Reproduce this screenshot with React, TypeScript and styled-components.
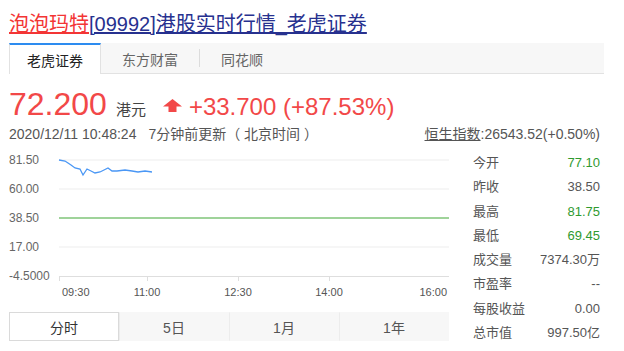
import styled, { createGlobalStyle } from "styled-components";

const GlobalStyle = createGlobalStyle`
  body {
    margin: 0;
    background: #fff;
    font-family: "Liberation Sans", "Noto Sans CJK SC", sans-serif;
    color: #333;
  }
`;

const Page = styled.div`
  width: 624px;
  height: 351px;
  box-sizing: border-box;
  padding: 10px 0 0 9px;
  overflow: hidden;
`;

const Title = styled.h1`
  margin: 0 0 5px;
  font-size: 20px;
  font-weight: normal;
  line-height: 28px;
  white-space: nowrap;
`;

const TitleLink = styled.a<{ $red?: boolean }>`
  color: ${(p) => (p.$red ? "#f33535" : "#27318f")};
  text-decoration: underline;
`;

const TabBar = styled.div`
  display: flex;
  width: 595px;
  height: 30px;
  background: #f7f7f7;
  border-bottom: 1px solid #e2e2e2;
`;

const SourceTab = styled.div<{ $active?: boolean }>`
  display: flex;
  align-items: center;
  box-sizing: border-box;
  height: ${(p) => (p.$active ? "31px" : "30px")};
  padding: 0 ${(p) => (p.$active ? "17px" : "20px")};
  font-size: 14px;
  color: ${(p) => (p.$active ? "#222" : "#666")};
  background: ${(p) => (p.$active ? "#fff" : "transparent")};
  border-top: 2px solid ${(p) => (p.$active ? "#2d8cf0" : "transparent")};
  border-left: 1px solid ${(p) => (p.$active ? "#e2e2e2" : "transparent")};
  border-right: 1px solid ${(p) => (p.$active ? "#e2e2e2" : "transparent")};
`;

const TabDivider = styled.span`
  align-self: center;
  width: 1px;
  height: 18px;
  background: #dcdcdc;
`;

const PriceRow = styled.div`
  display: flex;
  align-items: baseline;
  margin-top: 10px;
  height: 40px;
  line-height: 40px;
  color: #f24848;
`;

const Price = styled.span`
  font-size: 32px;
`;

const Currency = styled.span`
  margin-left: 9px;
  font-size: 15px;
  color: #444;
`;

const UpArrow = styled.svg`
  margin-left: 17px;
  width: 19px;
  height: 13px;
  align-self: center;
  margin-top: 3px;
`;

const Change = styled.span`
  margin-left: 7px;
  font-size: 24px;
`;

const InfoRow = styled.div`
  display: flex;
  justify-content: space-between;
  width: 591px;
  height: 20px;
  line-height: 20px;
  font-size: 14px;
  color: #555;
  white-space: nowrap;
`;

const Updated = styled.span`
  margin-left: 12px;
`;

const IndexLink = styled.a`
  color: #555;
  text-decoration: underline;
`;

const Body = styled.div`
  display: flex;
  margin-top: 6px;
`;

const ChartColumn = styled.div`
  display: flex;
  flex-direction: column;
  width: 440px;
`;

const Chart = styled.svg`
  display: block;
  width: 440px;
  height: 155px;
  font-family: "Liberation Sans", sans-serif;
`;

const PeriodTabs = styled.div`
  display: flex;
  margin-top: 7px;
  height: 29px;
  background: #f7f7f7;
`;

const PeriodTab = styled.div<{ $active?: boolean }>`
  flex: 1;
  display: flex;
  align-items: center;
  justify-content: center;
  box-sizing: border-box;
  font-size: 14px;
  color: ${(p) => (p.$active ? "#333" : "#555")};
  background: ${(p) => (p.$active ? "#fff" : "transparent")};
  border: 1px solid ${(p) => (p.$active ? "#dadada" : "transparent")};
  & + & {
    border-left: 1px solid #ececec;
  }
`;

const Stats = styled.dl`
  margin: 1px 0 0 24px;
  width: 127px;
`;

const StatRow = styled.div`
  display: flex;
  justify-content: space-between;
  height: 24.3px;
  line-height: 24px;
  font-size: 13px;
  color: #555;
`;

const StatLabel = styled.dt`
  margin: 0;
`;

const StatValue = styled.dd<{ $green?: boolean }>`
  margin: 0;
  color: ${(p) => (p.$green ? "#2f9a2f" : "#555")};
`;

const yLabels = [
  { text: "81.50", y: 10 },
  { text: "60.00", y: 39 },
  { text: "38.50", y: 68 },
  { text: "17.00", y: 97 },
  { text: "-4.5000", y: 126 },
];

const ticks = [50, 138, 229, 320, 440];

const times = [
  { text: "09:30", x: 53, anchor: "start" },
  { text: "11:00", x: 138, anchor: "middle" },
  { text: "12:30", x: 229, anchor: "middle" },
  { text: "14:00", x: 320, anchor: "middle" },
  { text: "16:00", x: 438, anchor: "end" },
];

const line =
  "50,10 56,11 59,13 62,15 66,18 71,19 74,25 78,19 82,21 86,23 91,22 95,20 99,18 103,21 108,21 116,20 123,21 129,22 136,21 143,22";

const stats = [
  { label: "今开", value: "77.10", green: true },
  { label: "昨收", value: "38.50" },
  { label: "最高", value: "81.75", green: true },
  { label: "最低", value: "69.45", green: true },
  { label: "成交量", value: "7374.30万" },
  { label: "市盈率", value: "--" },
  { label: "每股收益", value: "0.00" },
  { label: "总市值", value: "997.50亿" },
];

export default function App() {
  return (
    <Page>
      <GlobalStyle />
      <Title>
        <TitleLink $red>泡泡玛特</TitleLink>
        <TitleLink>[09992]港股实时行情_老虎证券</TitleLink>
      </Title>

      <TabBar>
        <SourceTab $active>老虎证券</SourceTab>
        <SourceTab>东方财富</SourceTab>
        <TabDivider />
        <SourceTab>同花顺</SourceTab>
      </TabBar>

      <PriceRow>
        <Price>72.200</Price>
        <Currency>港元</Currency>
        <UpArrow viewBox="0 0 19 13">
          <path d="M9.5 0 L19 7.5 H13.5 V13 H5.5 V7.5 H0 Z" fill="#f24848" />
        </UpArrow>
        <Change>+33.700 (+87.53%)</Change>
      </PriceRow>

      <InfoRow>
        <span>
          2020/12/11 10:48:24
          <Updated>7分钟前更新（ 北京时间 ）</Updated>
        </span>
        <span>
          <IndexLink>恒生指数</IndexLink>:26543.52(+0.50%)
        </span>
      </InfoRow>

      <Body>
        <ChartColumn>
          <Chart viewBox="0 0 440 155">
            {yLabels.map((l) => (
              <g key={l.text}>
                {l.y !== 68 && l.y !== 126 && (
                  <line x1={50} x2={440} y1={l.y} y2={l.y} stroke="#ededed" strokeWidth={1} />
                )}
                <text x={0} y={l.y + 4} fontSize={12} fill="#666">
                  {l.text}
                </text>
              </g>
            ))}
            <line x1={50} x2={440} y1={68} y2={68} stroke="#9fd39a" strokeWidth={2} />
            <line x1={50} x2={440} y1={126.5} y2={126.5} stroke="#dedede" strokeWidth={1} />
            {ticks.map((x) => (
              <line key={x} x1={x + 0.5} x2={x + 0.5} y1={126} y2={131} stroke="#dedede" />
            ))}
            {times.map((t) => (
              <text
                key={t.text}
                x={t.x}
                y={146}
                fontSize={11}
                fill="#555"
                textAnchor={t.anchor as "start" | "middle" | "end"}
              >
                {t.text}
              </text>
            ))}
            <polyline points={line} fill="none" stroke="#4a97f5" strokeWidth={1.3} />
          </Chart>
          <PeriodTabs>
            <PeriodTab $active>分时</PeriodTab>
            <PeriodTab>5日</PeriodTab>
            <PeriodTab>1月</PeriodTab>
            <PeriodTab>1年</PeriodTab>
          </PeriodTabs>
        </ChartColumn>

        <Stats>
          {stats.map((s) => (
            <StatRow key={s.label}>
              <StatLabel>{s.label}</StatLabel>
              <StatValue $green={s.green}>{s.value}</StatValue>
            </StatRow>
          ))}
        </Stats>
      </Body>
    </Page>
  );
}
